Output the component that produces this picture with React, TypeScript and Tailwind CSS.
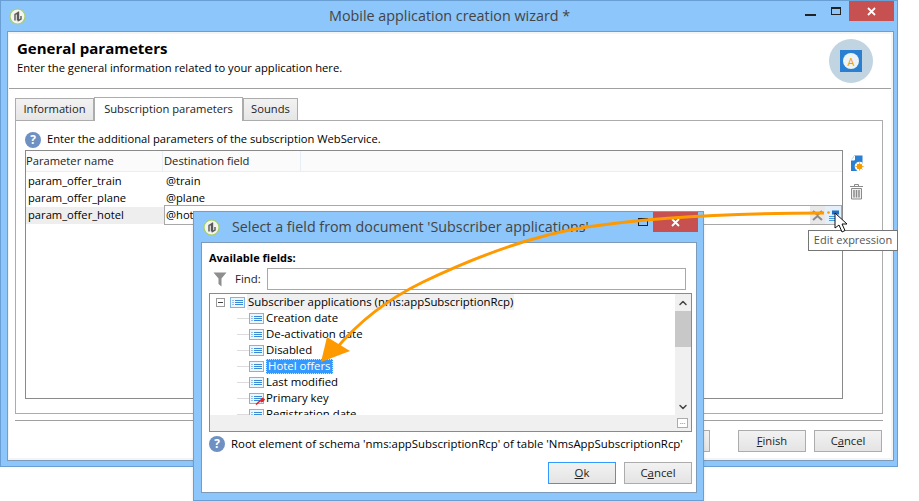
import { ChevronUp, ChevronDown } from 'lucide-react'

const font = "font-['Open_Sans','Noto_Sans',sans-serif]"

function AppLogo() {
  return (
    <svg width="17" height="17" viewBox="0 0 17 17" className="shrink-0">
      <circle cx="8.5" cy="8.5" r="7.5" fill="#f4f4f0" stroke="#a9cf6a" strokeWidth="1.2" />
      <path d="M6 12.5V6.5l2.5-1.5v7.5M9.5 3.5v9l2.5-1.5V8" fill="none" stroke="#5a5a5a" strokeWidth="1.4" />
    </svg>
  )
}

function HelpIcon() {
  return (
    <div className="w-4 h-4 shrink-0 rounded-full bg-[#6f90c2] flex items-center justify-center text-white text-[12px] font-bold leading-none">?</div>
  )
}

function FieldIcon({ keyed }: { keyed?: boolean }) {
  return (
    <svg width="16" height="13" viewBox="0 0 16 13" className="shrink-0">
      <rect x="0.5" y="1.5" width="14" height="10" fill="#eef6fd" stroke="#7fb4e4" />
      <path d="M2.5 4.5h1M5 4.5h8M2.5 6.5h1M5 6.5h8M2.5 8.5h1M5 8.5h8" stroke="#3b8ad6" />
      {keyed && <path d="M7 12.500l5-4.500M12 8l1.500-1.500 1.500 1-1 1.500-1.500.5z" stroke="#e0262c" strokeWidth="1.600" fill="#e0262c" />}
    </svg>
  )
}

function TreeRow({ label, selected, keyed }: { label: string; selected?: boolean; keyed?: boolean }) {
  return (
    <div className="h-4 shrink-0 flex items-center">
      <div className="w-[12px] ml-[27px] border-t border-[#dcdcdc]" />
      <FieldIcon keyed={keyed} />
      {selected ? (
        <span className="ml-[1px] px-[1px] h-[15px] flex items-center bg-[#3399ff] text-white border border-dotted border-[#cfe6ff] leading-none">{label}</span>
      ) : (
        <span className="ml-[1px] text-black">{label}</span>
      )}
    </div>
  )
}

function WinButton({ label, under, focused, after }: { label: string; under: string; focused?: boolean; after: string }) {
  return (
    <div className={`w-[68px] h-[22px] shrink-0 flex items-center justify-center text-[#222] border bg-gradient-to-b from-[#f2f2f2] to-[#e4e4e4] ${focused ? 'border-[#3399ff]' : 'border-[#acacac]'}`}>
      <span>{label}<span className="underline">{under}</span>{after}</span>
    </div>
  )
}

export default function App() {
  return (
    <div className={`relative w-[919px] h-[501px] bg-white overflow-hidden text-[11.2px] ${font}`}>
      {/* main wizard window */}
      <div className="w-[898px] h-[467px] flex flex-col bg-[#8cc6fb] border border-[#6a9fd4] pl-[6px] pr-[3px] pb-[5px]">
        <div className="h-[30px] shrink-0 flex items-center relative">
          <div className="ml-[2px] mr-auto"><AppLogo /></div>
          <span className="absolute left-[322px] top-[4px] text-[14.35px] text-[#444] whitespace-nowrap">Mobile application creation wizard *</span>
          <div className="flex items-start self-start">
            <div className="w-[11px] h-[2px] bg-[#222] mt-[13px] mr-[15px]" />
            <div className="w-[10px] h-[8px] border border-[#222] border-t-2 mt-[6px] mr-[8px]" />
            <div className="w-[45px] h-[20px] bg-[#c75050] flex items-center justify-center">
              <svg width="9" height="9" viewBox="0 0 9 9"><path d="M1 1l7 7M8 1l-7 7" stroke="white" strokeWidth="1.8" /></svg>
            </div>
          </div>
        </div>

        <div className="flex-1 flex flex-col bg-[#f4f4f4] border border-[#7d9bb8] pt-[2px] pl-[1px] pr-[2px] pb-[2px]">
          <div className="h-[55px] shrink-0 bg-white border-b border-[#a0a0a0] flex justify-between">
            <div className="pl-[8px] pt-[4px]">
              <div className="text-[15px] font-bold text-black leading-[21px]">General parameters</div>
              <div className="text-black leading-[18px]">Enter the general information related to your application here.</div>
            </div>
            <div className="mr-[18px] mt-[5px] w-11 h-11 rounded-full bg-[#c1d4e1] flex items-center justify-center">
              <div className="w-[22px] h-[22px] bg-[#2a7fd0] flex items-center justify-center">
                <div className="w-[16px] h-[16px] rounded-full bg-[#eef3f6] flex items-center justify-center text-[#f59b00] text-[11px] leading-none">A</div>
              </div>
            </div>
          </div>

          <div className="flex-1 flex flex-col pl-[6px] pr-[8px] pt-[7px] bg-white">
            <div className="flex items-end h-[24px] shrink-0">
              <div className="w-[79px] h-[22px] bg-gradient-to-b from-[#f2f2f2] to-[#e6e6e6] border border-b-0 border-[#acacac] flex items-center justify-center text-[#222]">Information</div>
              <div className="w-[149px] h-[24px] bg-white border border-b-0 border-[#acacac] flex items-center justify-center text-[#222] relative top-[1px] z-10">Subscription parameters</div>
              <div className="w-[55px] h-[22px] bg-gradient-to-b from-[#f2f2f2] to-[#e6e6e6] border border-b-0 border-[#acacac] flex items-center justify-center text-[#222]">Sounds</div>
            </div>
            <div className="h-[294px] shrink-0 border border-[#acacac] bg-white pl-[9px] flex flex-col">
              <div className="h-[29px] shrink-0 pt-[8px] flex items-center gap-[6px] text-black">
                <HelpIcon />
                <span>Enter the additional parameters of the subscription WebService.</span>
              </div>
              <div className="flex">
                <div className="w-[818px] h-[249px] border border-[#8a8a8a] bg-white flex flex-col">
                  <div className="h-[21px] shrink-0 bg-[#fbfbfb] border-b border-[#e6eef6] flex items-center text-[#222]">
                    <div className="w-[137px] h-full flex items-center border-r border-[#e6eef6]">Parameter name</div>
                    <div className="w-[138px] h-full flex items-center pl-[1px] border-r border-[#e6eef6]">Destination field</div>
                  </div>
                  <div className="h-[17px] mt-[1px] flex items-center text-black"><div className="w-[138px] pl-[2px]">param_offer_train</div><div className="pl-[2px]">@train</div></div>
                  <div className="h-[17px] flex items-center text-black"><div className="w-[138px] pl-[2px]">param_offer_plane</div><div className="pl-[2px]">@plane</div></div>
                  <div className="h-[17px] flex items-center text-black relative">
                    <div className="w-[138px] h-full bg-[#eeeeee] pl-[2px] flex items-center">param_offer_hotel</div>
                    <div className="flex-1 h-[20px] -mt-[1px] border border-[#a8a8a8] flex items-center justify-between pl-[1px]">
                      <span>@hotel</span>
                      <div className="flex h-full">
                        <div className="w-[15px] h-full bg-[#e8e8e8] flex items-center justify-center">
                          <svg width="11" height="11" viewBox="0 0 11 11"><path d="M1 1l4.500 4 4.500-4M1 10l4.500-4 4.500 4" fill="none" stroke="#8a8a8a" strokeWidth="2" /></svg>
                        </div>
                        <div className="w-[16px] h-full bg-[#e3f0fb] flex items-center justify-center">
                          <svg width="12" height="11" viewBox="0 0 12 11"><path d="M5 1.500h7M5 3.500h7" stroke="#1f6fc4" strokeWidth="2" /><path d="M2 6.500h9M2 8.500h9M2 10.500h9" stroke="#4a9be0" /><circle cx="1.500" cy="2.500" r="1.300" fill="#f59b00" /></svg>
                        </div>
                      </div>
                    </div>
                  </div>
                </div>
                <div className="ml-[6px] pt-[5px] flex flex-col items-center gap-[11px]">
                  <svg width="14" height="17" viewBox="0 0 14 17">
                    <path d="M4.500 0.500h8V9H9v7H1V5z" fill="#2a7fd0" />
                    <path d="M1 5h3.500V1" fill="white" stroke="white" />
                    <circle cx="9.500" cy="11.500" r="4.800" fill="white" />
                    <circle cx="9.500" cy="11.500" r="2.800" fill="#f59b00" />
                    <path d="M9.500 7.300v8.400M5.300 11.500h8.400M6.500 8.500l6 6M12.500 8.500l-6 6" stroke="#f59b00" strokeWidth="0.800" />
                  </svg>
                  <svg width="15" height="17" viewBox="0 0 15 17" fill="none" stroke="#8b8b8b">
                    <path d="M1 3.500h13M5.500 3V1.500h4V3" />
                    <path d="M2.500 5.500h10V16h-10z" fill="#f0f0f0" />
                    <path d="M5 7v7.500M7.500 7v7.500M10 7v7.500" strokeWidth="1.500" />
                  </svg>
                </div>
              </div>
            </div>
            <div className="h-[7px] shrink-0 border-b border-[#a0a0a0]" />
            <div className="flex-1 flex justify-end items-start gap-[8px] pt-[9px] pr-[1px]">
              <div className="mr-[20px]"><WinButton label="" under="" after="" /></div>
              <WinButton label="" under="F" after="inish" />
              <WinButton label="C" under="a" after="ncel" />
            </div>
          </div>
        </div>
      </div>

      {/* field selection dialog */}
      <div className="absolute left-[193px] top-[211px] w-[511px] h-[290px] flex flex-col bg-[#8cc6fb] border border-[#6a9fd4] pl-[7px] pr-[6px] pb-[7px] shadow-sm text-[11.4px]">
        <div className="h-[30px] shrink-0 relative flex items-center">
          <div className="ml-[2px]"><AppLogo /></div>
          <span className="ml-[12px] text-[14.3px] text-[#444] whitespace-nowrap">Select a field from document 'Subscriber applications'</span>
          <div className="absolute right-[49px] top-[6px] w-[10px] h-[8px] border border-[#222] border-t-2" />
          <div className="absolute right-[-1px] top-0 w-[45px] h-[20px] bg-[#c75050] flex items-center justify-center">
            <svg width="9" height="9" viewBox="0 0 9 9"><path d="M1 1l7 7M8 1l-7 7" stroke="white" strokeWidth="1.8" /></svg>
          </div>
        </div>
        <div className="flex-1 bg-white border border-[#7d9bb8] pl-[7px] pr-[3px] flex flex-col">
          <div className="h-[24px] shrink-0 pt-[6px] font-bold text-[11px] text-black leading-[18px]">Available fields:</div>
          <div className="h-[24px] shrink-0 flex items-center">
            <svg width="14" height="15" viewBox="0 0 14 15" className="ml-[4px]"><path d="M0.500 0.500h13L8.500 6.500V14.500L5.500 12V6.500z" fill="#8e8e8e" /></svg>
            <span className="ml-[8px] w-[27px] text-[#222]">Find:</span>
            <div className="ml-[5px] w-[419px] h-[22px] border border-[#a8a8a8] bg-white" />
          </div>
          <div className="h-[139px] mt-[2px] shrink-0 border border-[#8a8a8a] bg-[#f0f0f0] flex flex-col w-[483px]">
            <div className="h-[121px] shrink-0 flex">
              <div className="flex-1 bg-white overflow-hidden flex flex-col">
                <div className="h-4 shrink-0 flex items-center">
                  <div className="ml-[6px] w-[9px] h-[9px] border border-[#9a9a9a] flex items-center justify-center">
                    <div className="w-[5px] h-[1px] bg-[#444]" />
                  </div>
                  <div className="ml-[5px]"><FieldIcon /></div>
                  <span className="ml-[1px] pl-[1px] pr-[1px] bg-[#f0f0f0] text-black whitespace-nowrap h-4 flex items-center">Subscriber applications (nms:appSubscriptionRcp)</span>
                </div>
                <TreeRow label="Creation date" />
                <TreeRow label="De-activation date" />
                <TreeRow label="Disabled" />
                <TreeRow label="Hotel offers" selected />
                <TreeRow label="Last modified" />
                <TreeRow label="Primary key" keyed />
                <TreeRow label="Registration date" />
              </div>
              <div className="w-[16px] shrink-0 flex flex-col items-center justify-between">
                <div className="w-full flex flex-col items-center">
                  <ChevronUp size={12} strokeWidth={3} className="text-[#444] mt-[3px] mb-[2px]" />
                  <div className="w-full h-[36px] bg-[#c8c8c8]" />
                </div>
                <ChevronDown size={12} strokeWidth={3} className="text-[#444] mb-[2px]" />
              </div>
            </div>
            <div className="flex-1 flex justify-end items-center pr-[3px]">
              <div className="w-[11px] h-[10px] border border-[#acacac] bg-white flex items-center justify-center text-[7px] leading-none text-[#444]">···</div>
            </div>
          </div>
          <div className="h-[24px] shrink-0 flex items-center gap-[6px]">
            <HelpIcon />
            <span className="text-black whitespace-nowrap">Root element of schema 'nms:appSubscriptionRcp' of table 'NmsAppSubscriptionRcp'</span>
          </div>
          <div className="flex justify-end gap-[8px] pt-[6px] pr-[1px]">
            <WinButton label="" under="O" after="k" focused />
            <WinButton label="C" under="a" after="ncel" />
          </div>
        </div>
      </div>

      {/* orange callout arrow */}
      <svg width="919" height="501" viewBox="0 0 919 501" className="absolute left-0 top-0 pointer-events-none">
        <path d="M824 213C740 213 660 216 587 227C540 234 490 250 423 282C390 298 360 320 335 350" fill="none" stroke="#ff9900" strokeWidth="3" />
        <path d="M321 362L327 337L350 351z" fill="#ff9900" />
      </svg>

      {/* tooltip and mouse pointer */}
      <div className="absolute left-[808px] top-[230px] w-[90px] h-[21px] bg-white border border-[#767676] flex items-center justify-center text-[#555] text-[11px] whitespace-nowrap">Edit expression</div>
      <svg width="14" height="21" viewBox="0 0 14 21" className="absolute left-[834px] top-[212px]">
        <path d="M1 1V16l4-3 3 7 3-1.500-3-6.500h5z" fill="white" stroke="#111" />
      </svg>
    </div>
  )
}
